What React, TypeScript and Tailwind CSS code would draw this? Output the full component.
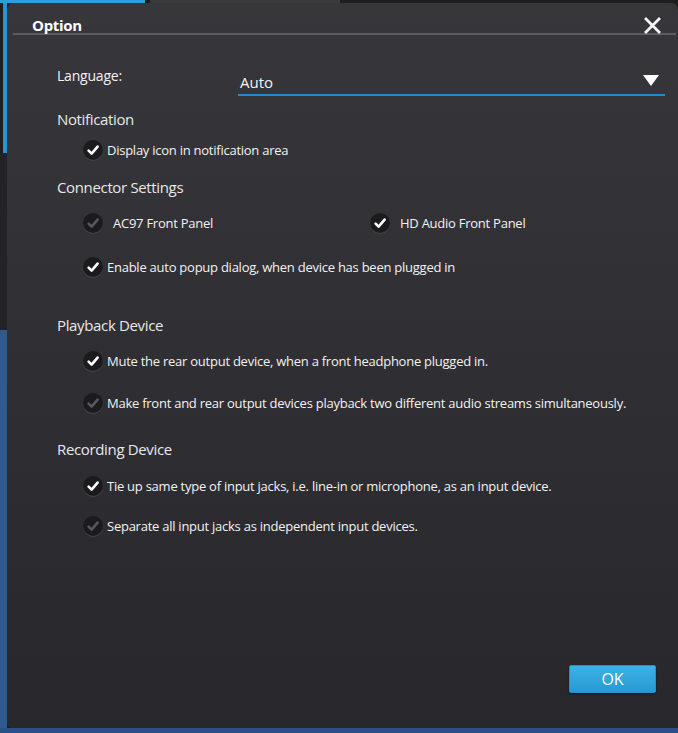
import { ReactNode } from 'react'

const font = "font-['Open_Sans','Noto_Sans',sans-serif]"

const Check = ({ checked = true, disabled = false }: { checked?: boolean; disabled?: boolean }) => (
  <span className="relative flex h-[20px] w-[20px] shrink-0 items-center justify-center rounded-full bg-[#1b1b1e] shadow-[0_1px_1px_#48484c]">
    {checked && (
      <svg width="20" height="20" viewBox="0 0 20 20">
        <path
          d="M5.6 10.6 L8.6 13.6 L14.6 6.6"
          fill="none"
          stroke={disabled ? '#57575c' : '#ffffff'}
          strokeWidth="2.6"
          strokeLinecap="round"
          strokeLinejoin="round"
        />
      </svg>
    )}
  </span>
)

const Option = ({
  children,
  disabled = false,
  gap = 'gap-[4px]',
}: {
  children: ReactNode
  disabled?: boolean
  gap?: string
}) => (
  <label className={`flex h-[24px] items-center ${gap} text-[13px] tracking-[-0.25px] text-[#f2f2f2]`}>
    <Check disabled={disabled} />
    <span className="pt-[2px]">{children}</span>
  </label>
)

const Section = ({ children, className = '' }: { children: ReactNode; className?: string }) => (
  <div className={`flex h-[24px] items-center text-[15px] tracking-[-0.35px] text-[#e8e8e8] ${className}`}>
    {children}
  </div>
)

export default function App() {
  return (
    <div className={`flex h-[733px] w-[678px] flex-col overflow-hidden bg-[#1f1f21] ${font}`}>
      <div className="flex h-[3px] shrink-0">
        <div className="w-[145px] bg-[#2a9fd8]" />
        <div className="w-[5px] bg-[#1c1c1c]" />
        <div className="w-[190px] bg-[#3a3a3c]" />
        <div className="flex-1 bg-[#1e1e1e]" />
      </div>
      <div className="flex min-h-0 flex-1">
        <div className="flex w-[7px] shrink-0 flex-col">
          <div className="h-[150px] border-l-[3px] border-[#1f1f21] bg-[#2596d1]" />
          <div className="h-[177px] bg-[#232325]" />
          <div className="flex-1 bg-[#2f5a8e]" />
        </div>
        <div className="flex flex-1 flex-col rounded-t-[7px] rounded-bl-[5px] bg-gradient-to-b from-[#36363b] to-[#28282c]">
          <div className="relative h-[30px] shrink-0">
            <div className="pl-[25px] pt-[12px] text-[15px] font-bold leading-[20px] tracking-[-0.3px] text-white">
              Option
            </div>
            <button className="absolute right-[17px] top-[14px] text-white">
              <svg width="17" height="17" viewBox="0 0 17 17">
                <path d="M2 2 L15 15 M15 2 L2 15" stroke="#f4f4f4" strokeWidth="2.8" strokeLinecap="square" />
              </svg>
            </button>
          </div>
          <div className="ml-[6px] mr-[2px] h-[2px] shrink-0 bg-[#5d5d60]" />

          <div className="flex flex-1 flex-col pl-[50px]">
            <div className="mt-[28px] flex items-start">
              <div className="flex h-[24px] w-[181px] items-center text-[14px] tracking-[-0.2px] text-[#f2f2f2]">
                Language:
              </div>
              <div className="mt-[7px] flex h-[26px] w-[427px] items-center justify-between border-b-2 border-[#1e8ad0] pl-[2px] pr-[6px] text-[15px] text-[#f2f2f2]">
                <span>Auto</span>
                <svg width="16" height="12" viewBox="0 0 16 12" className="-mt-[2px]">
                  <path d="M0 0 L16 0 L8 11 Z" fill="#ffffff" />
                </svg>
              </div>
            </div>

            <Section className="mt-[11px]">Notification</Section>
            <div className="ml-[26px] mt-[7px]">
              <Option>Display icon in notification area</Option>
            </div>

            <Section className="mt-[13px]">Connector Settings</Section>
            <div className="ml-[26px] mt-[12px] flex">
              <div className="w-[287px]">
                <Option disabled gap="gap-[10px]">AC97 Front Panel</Option>
              </div>
              <Option gap="gap-[10px]">HD Audio Front Panel</Option>
            </div>
            <div className="ml-[26px] mt-[20px]">
              <Option>Enable auto popup dialog, when device has been plugged in</Option>
            </div>

            <Section className="mt-[34px]">Playback Device</Section>
            <div className="ml-[26px] mt-[12px]">
              <Option>Mute the rear output device, when a front headphone plugged in.</Option>
            </div>
            <div className="ml-[26px] mt-[18px]">
              <Option disabled>
                Make front and rear output devices playback two different audio streams simultaneously.
              </Option>
            </div>

            <Section className="mt-[22px]">Recording Device</Section>
            <div className="ml-[26px] mt-[13px]">
              <Option>Tie up same type of input jacks, i.e. line-in or microphone, as an input device.</Option>
            </div>
            <div className="ml-[26px] mt-[16px]">
              <Option disabled>Separate all input jacks as independent input devices.</Option>
            </div>

            <div className="flex-1" />
            <div className="flex justify-end pb-[35px] pr-[22px]">
              <button className="h-[28px] w-[87px] rounded-[2px] border border-[#2a8fc6] bg-gradient-to-b from-[#3db2e4] to-[#2699d5] text-[16px] text-white shadow-[0_1px_2px_rgba(0,0,0,0.5)]">
                OK
              </button>
            </div>
          </div>
        </div>
      </div>
      <div className="h-[5px] shrink-0 bg-[#2b4f88]" />
    </div>
  )
}
